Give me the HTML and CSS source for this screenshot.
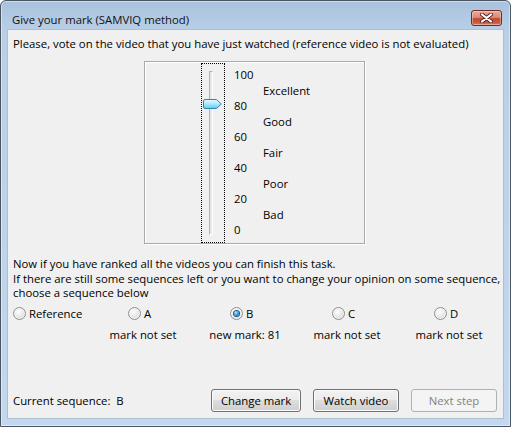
FILE: index.html
```html
<!DOCTYPE html>
<html>
<head>
<meta charset="utf-8">
<title>Give your mark</title>
<link rel="stylesheet" href="styles.css">
</head>
<body>
<div class="window">
  <div class="titlebar">
    <span class="title">Give your mark (SAMVIQ method)</span>
    <button class="close" aria-label="Close">
      <svg width="13" height="10" viewBox="0 0 13 10">
        <path d="M2 1.5 L11 8.5 M11 1.5 L2 8.5" stroke="#5b2a24" stroke-width="4" stroke-linecap="round" fill="none"/>
        <path d="M2 1.5 L11 8.5 M11 1.5 L2 8.5" stroke="#ffffff" stroke-width="2.2" stroke-linecap="round" fill="none"/>
      </svg>
    </button>
  </div>
  <div class="client">
    <p class="intro">Please, vote on the video that you have just watched (reference video is not evaluated)</p>
    <div class="groupbox">
      <div class="slider">
        <div class="track"></div>
        <svg class="thumb" width="19" height="10" viewBox="0 0 19 10">
          <defs>
            <linearGradient id="tg" x1="0" y1="0" x2="0" y2="1">
              <stop offset="0" stop-color="#e4f8ff"/>
              <stop offset="0.45" stop-color="#b4e9fb"/>
              <stop offset="1" stop-color="#5cc9ef"/>
            </linearGradient>
          </defs>
          <path d="M2 0.5 H13.5 L18.3 5 L13.5 9.5 H2 Q0.5 9.5 0.5 8 V2 Q0.5 0.5 2 0.5 Z" fill="url(#tg)" stroke="#2f86b8" stroke-width="1"/>
        </svg>
      </div>
      <div class="scale">
        <span class="num">100</span>
        <span class="lbl">Excellent</span>
        <span class="num">80</span>
        <span class="lbl">Good</span>
        <span class="num">60</span>
        <span class="lbl">Fair</span>
        <span class="num">40</span>
        <span class="lbl">Poor</span>
        <span class="num">20</span>
        <span class="lbl">Bad</span>
        <span class="num">0</span>
      </div>
    </div>
    <p class="info">Now if you have ranked all the videos you can finish this task.<br>If there are still some sequences left or you want to change your opinion on some sequence,<br>choose a sequence below</p>
    <div class="sequences">
      <div class="seq">
        <span class="radio"><span class="circle"></span>Reference</span>
      </div>
      <div class="seq">
        <span class="radio"><span class="circle"></span>A</span>
        <div class="mark"><span>mark not set</span></div>
      </div>
      <div class="seq">
        <span class="radio"><span class="circle checked"></span>B</span>
        <div class="mark"><span>new mark: 81</span></div>
      </div>
      <div class="seq">
        <span class="radio"><span class="circle"></span>C</span>
        <div class="mark"><span>mark not set</span></div>
      </div>
      <div class="seq">
        <span class="radio"><span class="circle"></span>D</span>
        <div class="mark"><span>mark not set</span></div>
      </div>
    </div>
    <div class="footer">
      <span class="current">Current sequence:&nbsp; B</span>
      <div class="buttons">
        <button class="btn btn-change">Change mark</button>
        <button class="btn btn-watch">Watch video</button>
        <button class="btn btn-next" disabled>Next step</button>
      </div>
    </div>
  </div>
</div>
</body>
</html>
```
FILE: styles.css
```css
* { box-sizing: border-box; }

html, body {
  margin: 0;
  padding: 0;
  background: #ffffff;
}

body {
  font-family: "Open Sans", "Noto Sans", sans-serif;
  font-size: 11.35px;
  color: #000;
}

.window {
  width: 511px;
  height: 427px;
  border: 1px solid #4a5560;
  border-radius: 6px 6px 0 0;
  background: linear-gradient(to bottom, #a9c2dd 0px, #b9cfe7 30px, #c3d8ee 100%);
  box-shadow: inset 0 0 0 1px rgba(255, 255, 255, 0.45);
  display: flex;
  flex-direction: column;
  overflow: hidden;
}

.titlebar {
  height: 29px;
  flex: none;
  display: flex;
  justify-content: space-between;
  align-items: flex-start;
  padding-left: 11px;
  padding-right: 8px;
}

.title {
  padding-top: 11px;
  line-height: 15px;
  color: #111;
}

.close {
  margin-top: 9px;
  width: 31px;
  height: 16px;
  padding: 0;
  border: 1px solid #6b2c24;
  border-radius: 3px;
  background: linear-gradient(to bottom, #e9aa9b 0%, #dc8a78 45%, #c4482f 55%, #c85a44 85%, #d98a70 100%);
  box-shadow: inset 0 0 0 1px rgba(255, 220, 210, 0.45);
  display: flex;
  align-items: center;
  justify-content: center;
}

.client {
  height: 388px;
  flex: none;
  margin: 0 7px;
  background: #f0f0f0;
  padding: 6px 6px 6px 5px;
  display: flex;
  flex-direction: column;
  outline: 1px solid #aebfd3;
}

.intro {
  margin: 0;
  line-height: 15px;
  white-space: nowrap;
}

.groupbox {
  margin: 10px 0 0 131px;
  width: 221px;
  height: 183px;
  border: 1px solid #a9a9a9;
  box-shadow: inset 1px 1px 0 #ffffff, 1px 1px 0 #ffffff;
  padding: 1px 0 0 56px;
  display: flex;
  align-items: flex-start;
}

.slider {
  position: relative;
  width: 24px;
  height: 180px;
  border: 1px dotted #000;
  padding: 7px 0 0 7px;
}

.track {
  width: 4px;
  height: 164px;
  background: #e6e6e6;
  border-left: 1px solid #b4b4b4;
  border-top: 1px solid #b4b4b4;
  border-right: 1px solid #ffffff;
  border-bottom: 1px solid #ffffff;
}

.thumb {
  position: absolute;
  left: 1px;
  top: 35px;
}

.scale {
  margin: 4px 0 0 9px;
  display: flex;
  flex-direction: column;
  line-height: 15.5px;
}

.lbl {
  padding-left: 29px;
}

.info {
  margin: 13px 0 0;
  line-height: 14.5px;
  white-space: nowrap;
}

.sequences {
  margin-top: 5px;
  display: grid;
  grid-template-columns: 115px 102px 102px 102px 1fr;
}

.seq {
  display: flex;
  flex-direction: column;
}

.radio {
  display: flex;
  align-items: center;
  line-height: 15px;
  gap: 3px;
}

.circle {
  width: 13px;
  height: 13px;
  border-radius: 50%;
  border: 1px solid #8f8f8f;
  background: radial-gradient(circle at 40% 35%, #ffffff 0%, #e9e9e9 45%, #cfcfcf 100%);
  box-shadow: inset 0 0 0 1px rgba(255, 255, 255, 0.6);
  display: flex;
  align-items: center;
  justify-content: center;
}

.circle.checked::after {
  content: "";
  width: 5px;
  height: 5px;
  border-radius: 50%;
  background: radial-gradient(circle at 40% 35%, #b8ecff 0%, #2c8fd0 55%, #0c4d7e 100%);
  box-shadow: 0 0 0 1px #1f5d8c;
}

.mark {
  margin-top: 6px;
  width: 30px;
  display: flex;
  justify-content: center;
  line-height: 15px;
  white-space: nowrap;
}

.footer {
  margin-top: auto;
  display: flex;
  align-items: center;
  justify-content: space-between;
}

.current {
  line-height: 15px;
}

.buttons {
  display: flex;
  gap: 12px;
}

.btn {
  font: inherit;
  height: 23px;
  padding: 0;
  border: 1px solid #707070;
  border-radius: 3px;
  background: linear-gradient(to bottom, #f2f2f2 0%, #ebebeb 50%, #dddddd 50%, #cfcfcf 100%);
  box-shadow: inset 0 0 0 1px #fbfbfb;
  color: #000;
}

.btn-change { width: 90px; }
.btn-watch { width: 86px; }
.btn-next { width: 86px; }

.btn:disabled {
  border-color: #adb2b5;
  background: #f4f4f4;
  box-shadow: none;
  color: #838383;
}
```
